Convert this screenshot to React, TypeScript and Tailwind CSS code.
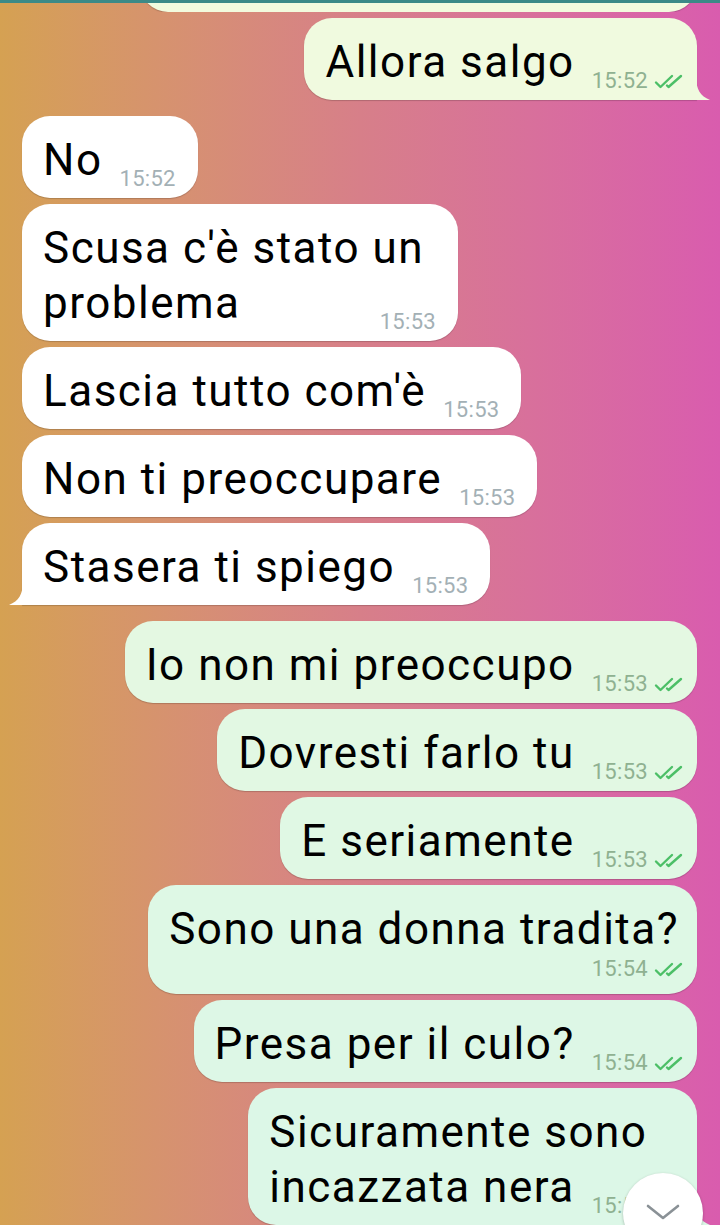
import React from 'react';

type Msg = {
  text: string;
  time: string;
  out: boolean;
  layout: 'inline' | 'below' | 'overlap' | 'twoline';
  bg?: string;
  tail?: boolean;
  gap: string;
};

const messages: Msg[] = [
  { text: 'Allora salgo', time: '15:52', out: true, layout: 'inline', bg: 'bg-[#f0fadf]', tail: true, gap: 'mt-[6px]' },
  { text: 'No', time: '15:52', out: false, layout: 'inline', gap: 'mt-[16px]' },
  { text: "Scusa c'è stato un|problema", time: '15:53', out: false, layout: 'overlap', gap: 'mt-[6px]' },
  { text: "Lascia tutto com'è", time: '15:53', out: false, layout: 'inline', gap: 'mt-[6px]' },
  { text: 'Non ti preoccupare', time: '15:53', out: false, layout: 'inline', gap: 'mt-[6px]' },
  { text: 'Stasera ti spiego', time: '15:53', out: false, layout: 'inline', tail: true, gap: 'mt-[6px]' },
  { text: 'Io non mi preoccupo', time: '15:53', out: true, layout: 'inline', bg: 'bg-[#e4f8e2]', gap: 'mt-[16px]' },
  { text: 'Dovresti farlo tu', time: '15:53', out: true, layout: 'inline', bg: 'bg-[#e2f8e3]', gap: 'mt-[6px]' },
  { text: 'E seriamente', time: '15:53', out: true, layout: 'inline', bg: 'bg-[#e0f8e4]', gap: 'mt-[6px]' },
  { text: 'Sono una donna tradita?', time: '15:54', out: true, layout: 'below', bg: 'bg-[#def8e5]', gap: 'mt-[6px]' },
  { text: 'Presa per il culo?', time: '15:54', out: true, layout: 'inline', bg: 'bg-[#ddf7e6]', gap: 'mt-[6px]' },
  { text: 'Sicuramente sono|incazzata nera', time: '15:54', out: true, layout: 'twoline', bg: 'bg-[#dcf7e7]', tail: true, gap: 'mt-[6px]' },
];

const textCls = 'text-[44px] leading-[55px] tracking-[1.5px] text-black whitespace-nowrap';

function Ticks() {
  return (
    <svg width="31" height="15" viewBox="0 0 31 15" fill="none" className="ml-[6px] mb-[5px] shrink-0">
      <path d="M2 8.5 L6.5 13 L18 2" stroke="#4cbf67" strokeWidth="2.4" strokeLinecap="round" strokeLinejoin="round" />
      <path d="M13 11.5 L14.5 13 L27 2" stroke="#4cbf67" strokeWidth="2.4" strokeLinecap="round" strokeLinejoin="round" />
    </svg>
  );
}

function Meta({ m }: { m: Msg }) {
  return (
    <span className="flex items-end shrink-0">
      <span className={`text-[22px] leading-[26px] tracking-[0.3px] ${m.out ? 'text-[#8fb191]' : 'text-[#a3b0b5]'}`}>{m.time}</span>
      {m.out && <Ticks />}
    </span>
  );
}

function Bubble({ m }: { m: Msg }) {
  const base = m.out ? m.bg : 'bg-white';
  const fill = m.out ? (m.bg || '').replace('bg-[', '').replace(']', '') : '#ffffff';
  const corner = m.tail ? (m.out ? 'rounded-br-none' : 'rounded-bl-none') : '';
  const pr = m.out ? 'pr-[12px]' : 'pr-[22px]';
  return (
    <div className={`flex ${m.out ? 'justify-end pr-[23px]' : 'justify-start pl-[22px]'} ${m.gap}`}>
      <div className={`relative ${base} ${corner} rounded-[28px] pt-[17px] pb-[10px] pl-[21px] ${pr} shadow-[0_1px_1px_rgba(0,0,0,0.18)]`}>
        {m.layout === 'inline' && (
          <div className="flex items-end">
            <span className={textCls}>{m.text}</span>
            <span className="ml-[17px] -mb-[4px]">
              <Meta m={m} />
            </span>
          </div>
        )}
        {m.layout === 'overlap' && (
          <div className="flex flex-col">
            <span className={`${textCls} pr-[12px]`}>{m.text.split('|')[0]}</span>
            <span className={textCls}>{m.text.split('|')[1]}</span>
            <span className="self-end -mt-[22px] -mb-[4px]">
              <Meta m={m} />
            </span>
          </div>
        )}
        {m.layout === 'below' && (
          <div className="flex flex-col">
            <span className={`${textCls} pr-[6px]`}>{m.text}</span>
            <span className="self-end -mt-[1px] mb-[2px]">
              <Meta m={m} />
            </span>
          </div>
        )}
        {m.layout === 'twoline' && (
          <div className="flex flex-col">
            <span className={textCls}>{m.text.split('|')[0]}</span>
            <div className="flex items-end">
              <span className={textCls}>{m.text.split('|')[1]}</span>
              <span className="ml-[17px] -mb-[4px]">
                <Meta m={m} />
              </span>
            </div>
          </div>
        )}
        {m.tail && m.out && (
          <svg width="14" height="22" viewBox="0 0 14 22" className="absolute -right-[13px] bottom-0">
            <path d="M0 0 C0.5 11 4 18 14 22 L0 22 Z" fill={fill} />
          </svg>
        )}
        {m.tail && !m.out && (
          <svg width="14" height="22" viewBox="0 0 14 22" className="absolute -left-[13px] bottom-0">
            <path d="M14 0 C13.5 11 10 18 0 22 L14 22 Z" fill={fill} />
          </svg>
        )}
      </div>
    </div>
  );
}

export default function App() {
  return (
    <div
      className="relative h-[1225px] w-full overflow-hidden bg-linear-to-r from-[#d5a152] via-[#d77f89] to-[#d95cae]"
      style={{ fontFamily: 'Roboto, "Noto Sans", sans-serif' }}
    >
      <div className="h-[3px] bg-[#3b8a87]" />
      <div className="h-[9px] overflow-hidden flex flex-col justify-end">
        <div className="flex justify-end pr-[23px] shrink-0">
          <div className="h-[80px] w-[557px] rounded-[28px] bg-[#f2fbde] shadow-[0_1px_1px_rgba(0,0,0,0.18)]" />
        </div>
      </div>
      {messages.map((m, i) => (
        <Bubble key={i} m={m} />
      ))}
      <div className="absolute left-[623px] top-[1173px] h-[80px] w-[80px] rounded-full bg-white shadow-[0_1px_3px_rgba(0,0,0,0.25)] flex justify-center pt-[30px]">
        <svg width="34" height="18" viewBox="0 0 34 18" fill="none">
          <path d="M2 3 L17 15 L32 3" stroke="#8a9196" strokeWidth="2.6" strokeLinecap="round" strokeLinejoin="round" />
        </svg>
      </div>
    </div>
  );
}
